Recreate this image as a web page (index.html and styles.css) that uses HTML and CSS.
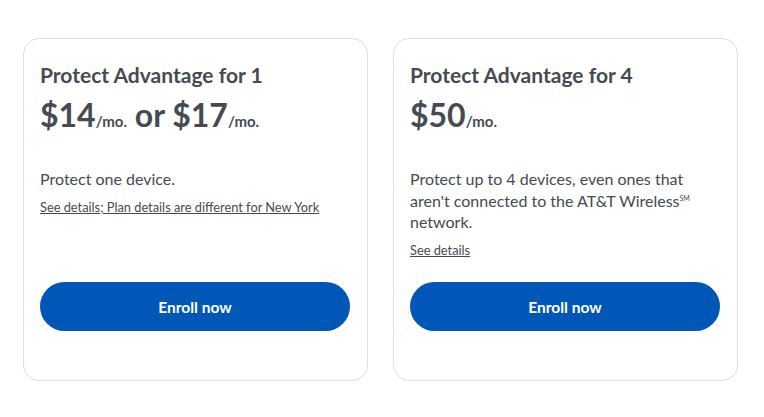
FILE: index.html
```html
<!DOCTYPE html>
<html>
<head>
<meta charset="utf-8">
<link rel="stylesheet" href="styles.css">
</head>
<body>
<div class="plans">
  <div class="card">
    <h2 class="title">Protect Advantage for 1</h2>
    <div class="price"><span class="amt">$14</span><span class="per">/mo.</span> or <span class="amt">$17</span><span class="per">/mo.</span></div>
    <p class="desc">Protect one device.</p>
    <a class="link" href="#">See details; Plan details are different for New York</a>
    <button class="btn">Enroll now</button>
  </div>
  <div class="card">
    <h2 class="title">Protect Advantage for 4</h2>
    <div class="price"><span class="amt">$50</span><span class="per">/mo.</span></div>
    <p class="desc">Protect up to 4 devices, even ones that aren't connected to the AT&amp;T Wireless<sup class="sm">SM</sup> network.</p>
    <a class="link" href="#">See details</a>
    <button class="btn">Enroll now</button>
  </div>
</div>
</body>
</html>
```
FILE: styles.css
```css
html, body {
  margin: 0;
  padding: 0;
  background: #ffffff;
}
body {
  font-family: Lato, "Open Sans", sans-serif;
  color: #454b52;
}
.plans {
  display: flex;
  gap: 25px;
  padding: 38px 0 0 23px;
}
.card {
  box-sizing: border-box;
  width: 345px;
  height: 343px;
  border: 1px solid #dcdfe3;
  border-radius: 16px;
  padding: 22px 16px 49px 16px;
  display: flex;
  flex-direction: column;
  align-items: flex-start;
}
.title {
  margin: 0;
  font-size: 21px;
  line-height: 28px;
  font-weight: 700;
}
.price {
  margin-top: 6px;
  font-size: 32px;
  line-height: 40px;
  font-weight: 700;
}
.per {
  font-size: 15px;
}
.desc {
  margin: 27px 0 0 0;
  font-size: 16px;
  line-height: 21.5px;
  max-width: 300px;
}
.sm {
  font-size: 7px;
  vertical-align: 6px;
  line-height: 0;
}
.link {
  margin-top: 8px;
  font-size: 12.8px;
  line-height: 18px;
  color: #454b52;
  text-decoration: underline;
}
.btn {
  margin-top: auto;
  width: 310px;
  height: 49px;
  border: none;
  border-radius: 25px;
  background: #0057b8;
  color: #ffffff;
  font-family: Lato, "Open Sans", sans-serif;
  font-size: 15.5px;
  font-weight: 700;
}
```
